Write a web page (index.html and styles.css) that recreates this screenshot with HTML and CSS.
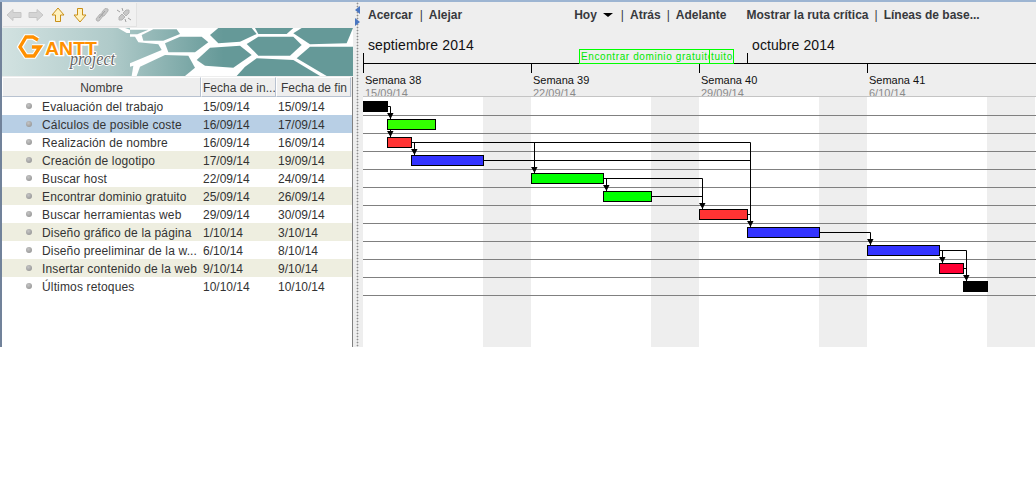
FILE: index.html
```html
<!DOCTYPE html>
<html lang="es">
<head>
  <meta charset="UTF-8" />
  <title>GanttProject</title>
  <link rel="stylesheet" href="styles.css">
</head>
<body>
  <div class="app">
    <div class="left">
      <div class="icons">
        <div class="iconbox">
          <svg width="16" height="16" viewBox="0 0 16 16"><path class="off" d="M1 8 7 2.500V5.500H15V10.500H7V13.500Z"/></svg>
          <svg width="16" height="16" viewBox="0 0 16 16"><path class="off" d="M15 8 9 2.500V5.500H1V10.500H9V13.500Z"/></svg>
          <svg width="16" height="16" viewBox="0 0 16 16"><path class="gold" d="M8 1 14 8H10.500V14.500H5.500V8H2Z"/></svg>
          <svg width="16" height="16" viewBox="0 0 16 16"><path class="gold" d="M8 15 14 8H10.500V1.500H5.500V8H2Z"/></svg>
          <svg width="16" height="16" viewBox="0 0 16 16"><path class="link" d="M2 12 6 7 8 7 9 9 5 14 3 14ZM8 5 11 1.500 14 2 14 4 10 9 8 9Z"/><path class="linkcut" d="M5 11 11 4"/></svg>
          <svg width="16" height="16" viewBox="0 0 16 16"><path class="link" d="M3 13 3 10 6 7 9 10 6 13ZM7 6 10 3 13 3 13 6 10 9Z"/><path class="linkcut" d="M1 3 4 5M6 1 7 4M15 13 12 11M10 15 9 12"/></svg>
        </div>
      </div>
      <div class="banner">
        <svg class="hexes" width="351" height="48" viewBox="-384 9 1053 144">
          <defs>
            <linearGradient id="fade" gradientUnits="userSpaceOnUse" x1="-384" y1="0" x2="280" y2="0">
              <stop offset="0" stop-color="#d2e2e1"/>
              <stop offset="0.5" stop-color="#afcac9"/>
              <stop offset="1" stop-color="#659998"/>
            </linearGradient>
          </defs>
          <rect x="-384" y="9" width="1053" height="144" fill="url(#fade)"/>
          <path class="lattice" d="M-36 9H-15L0 14H55L35 24H-10ZM0 9H669V153H0Z"/>
          <g class="cells">
            <polygon points="0,14 55,14 22,28 0,28"/>
            <polygon points="35,30 70,13 140,13 150,27 100,47 40,47"/>
            <polygon points="105,55 150,35 215,35 235,52 195,82 115,82"/>
            <polygon points="240,30 265,9 365,9 380,27 330,50 265,55"/>
            <polygon points="350,57 385,35 490,35 515,60 480,92 385,92"/>
            <polygon points="200,105 240,68 330,62 365,90 310,128 225,122"/>
            <polygon points="30,125 105,90 175,92 195,128 165,153 20,153"/>
            <polygon points="490,25 515,9 669,9 650,55 540,58"/>
            <polygon points="500,100 540,65 669,65 669,153 590,153"/>
            <polygon points="345,125 380,100 490,105 570,153 320,153"/>
            <polygon points="375,9 490,9 470,27 385,27"/>
            <polygon points="0,35 15,35 25,52 85,58 95,75 0,115"/>
            <polygon points="0,125 10,122 5,153 0,153"/>
          </g>
          <path class="ghalo" d="M-276 45-291 36H-312L-330 66-312 93H-288L-270 66H-294"/>
          <path class="glogo" d="M-276 45-291 36H-312L-330 66-312 93H-288L-270 66H-294"/>
          <text class="gname" x="-255" y="90" textLength="156" lengthAdjust="spacingAndGlyphs">ANTT</text>
          <text class="gsub" x="-180" y="120" textLength="135" lengthAdjust="spacingAndGlyphs">project</text>
        </svg>
      </div>
      <div class="table">
        <div class="thead">
          <div class="th th-name">Nombre</div>
          <div class="th th-start">Fecha de in...</div>
          <div class="th th-end">Fecha de fin</div>
        </div>
        <div class="row"><span class="dot"></span><span class="name">Evaluación del trabajo</span><span class="start">15/09/14</span><span class="end">15/09/14</span></div>
        <div class="row selected"><span class="dot"></span><span class="name">Cálculos de posible coste</span><span class="start">16/09/14</span><span class="end">17/09/14</span></div>
        <div class="row"><span class="dot"></span><span class="name">Realización de nombre</span><span class="start">16/09/14</span><span class="end">16/09/14</span></div>
        <div class="row alt"><span class="dot"></span><span class="name">Creación de logotipo</span><span class="start">17/09/14</span><span class="end">19/09/14</span></div>
        <div class="row"><span class="dot"></span><span class="name">Buscar host</span><span class="start">22/09/14</span><span class="end">24/09/14</span></div>
        <div class="row alt"><span class="dot"></span><span class="name">Encontrar dominio gratuito</span><span class="start">25/09/14</span><span class="end">26/09/14</span></div>
        <div class="row"><span class="dot"></span><span class="name">Buscar herramientas web</span><span class="start">29/09/14</span><span class="end">30/09/14</span></div>
        <div class="row alt"><span class="dot"></span><span class="name">Diseño gráfico de la página</span><span class="start">1/10/14</span><span class="end">3/10/14</span></div>
        <div class="row"><span class="dot"></span><span class="name">Diseño preeliminar de la w...</span><span class="start">6/10/14</span><span class="end">8/10/14</span></div>
        <div class="row alt"><span class="dot"></span><span class="name">Insertar contenido de la web</span><span class="start">9/10/14</span><span class="end">9/10/14</span></div>
        <div class="row"><span class="dot"></span><span class="name">Últimos retoques</span><span class="start">10/10/14</span><span class="end">10/10/14</span></div>
      </div>
    </div>

    <div class="splitter">
      <span class="arrow-left"></span>
      <span class="arrow-right"></span>
    </div>

    <div class="chart">
      <div class="tools">
        <div class="tools-zoom">Acercar<i>|</i>Alejar</div>
        <div class="tools-nav">Hoy<b class="caret"></b><i class="first">|</i>Atrás<i>|</i>Adelante</div>
        <div class="tools-view">Mostrar la ruta crítica<i>|</i>Líneas de base...</div>
      </div>
      <div class="months">
        <div class="month month-sep">septiembre 2014</div>
        <div class="month month-oct">octubre 2014</div>
        <div class="flag flag-long">Encontrar dominio gratuito</div>
        <div class="flag flag-short">tuito</div>
      </div>
      <div class="weeks">
        <div class="week"><span class="wk">Semana 38</span><span class="wd">15/09/14</span></div>
        <div class="week"><span class="wk">Semana 39</span><span class="wd">22/09/14</span></div>
        <div class="week"><span class="wk">Semana 40</span><span class="wd">29/09/14</span></div>
        <div class="week"><span class="wk">Semana 41</span><span class="wd">6/10/14</span></div>
      </div>
      <svg class="gantt" width="673" height="250" viewBox="363 97 673 250">
        <defs>
          <path id="head" d="M-3 -6H3.500L1 -1H0Z"/>
        </defs>
        <g class="weekend">
          <rect x="483" y="97" width="48" height="250"/>
          <rect x="651" y="97" width="48" height="250"/>
          <rect x="819" y="97" width="48" height="250"/>
          <rect x="987" y="97" width="48" height="250"/>
        </g>
        <path class="rowline" d="M363 115.500H1036M363 133.500H1036M363 151.500H1036M363 169.500H1036M363 187.500H1036M363 205.500H1036M363 223.500H1036M363 241.500H1036M363 259.500H1036M363 277.500H1036M363 295.500H1036"/>
        <path class="dep" d="M388 106.500H390.500V137M412 142.500H750.500V227M534.500 142.500V173M414.500 142.500V155M484 160.500H750.500M604 178.500H702.500V209M606.500 178.500V191M652 196.500H702.500M748 214.500H750.500M820 232.500H870.500V245M940 250.500H966.500V281M942.500 250.500V263M964 268.500H966.500"/>
        <g class="bars">
          <rect class="black" x="363.500" y="101.500" width="24" height="10"/>
          <rect class="lime" x="387.500" y="119.500" width="48" height="10"/>
          <rect class="red" x="387.500" y="137.500" width="24" height="10"/>
          <rect class="blue" x="411.500" y="155.500" width="72" height="10"/>
          <rect class="green" x="531.500" y="173.500" width="72" height="10"/>
          <rect class="green" x="603.500" y="191.500" width="48" height="10"/>
          <rect class="red" x="699.500" y="209.500" width="48" height="10"/>
          <rect class="blue" x="747.500" y="227.500" width="72" height="10"/>
          <rect class="blue" x="867.500" y="245.500" width="72" height="10"/>
          <rect class="crimson" x="939.500" y="263.500" width="24" height="10"/>
          <rect class="black" x="963.500" y="281.500" width="24" height="10"/>
        </g>
        <g class="heads">
          <use href="#head" x="390" y="119"/>
          <use href="#head" x="390" y="137"/>
          <use href="#head" x="414" y="155"/>
          <use href="#head" x="534" y="173"/>
          <use href="#head" x="606" y="191"/>
          <use href="#head" x="702" y="209"/>
          <use href="#head" x="750" y="227"/>
          <use href="#head" x="870" y="245"/>
          <use href="#head" x="942" y="263"/>
          <use href="#head" x="966" y="281"/>
        </g>
      </svg>
    </div>
  </div>
</body>
</html>
```

FILE: styles.css
```css
html, body {
  margin: 0;
  padding: 0;
  background: #ffffff;
}
body {
  font-family: "Liberation Sans", Arial, sans-serif;
  font-size: 12px;
  color: #333333;
}
.app {
  width: 1036px;
  height: 347px;
  display: flex;
  background: #eeeeee;
  border-top: 2px solid #9db5d2;
  box-sizing: border-box;
  overflow: hidden;
}

/* left side */
.left {
  width: 353px;
  flex: none;
  border-left: 2px solid #71829a;
  box-sizing: border-box;
  display: flex;
  flex-direction: column;
}
.icons {
  height: 26px;
  padding-top: 1px;
  box-sizing: border-box;
}
.iconbox {
  width: 134px;
  height: 24px;
  margin-left: 1px;
  background: #f1f1f1;
  border-right: 1px solid #e2e2e2;
  border-bottom: 1px solid #e2e2e2;
  box-sizing: border-box;
  display: flex;
  align-items: center;
  gap: 6px;
  padding-left: 3px;
}
.off {
  fill: #d4d4d4;
  stroke: #c6c6c6;
}
.gold {
  fill: #fff2bf;
  stroke: #c98f16;
}
.link {
  fill: #c8c8c8;
  stroke: #b4b4b4;
}
.linkcut {
  fill: none;
  stroke: #a0a0a0;
}
.banner {
  height: 48px;
  flex: none;
}
.hexes {
  display: block;
}
.lattice {
  fill: #ffffff;
}
.cells polygon {
  fill: url(#fade);
}
.ghalo {
  fill: none;
  stroke: #ffffff;
  stroke-width: 17;
}
.glogo {
  fill: none;
  stroke: #ff9000;
  stroke-width: 10;
}
.gname {
  font-family: "Liberation Sans", Arial, sans-serif;
  font-weight: bold;
  font-size: 54px;
  fill: #ff9000;
  stroke: #ffffff;
  stroke-width: 8px;
  paint-order: stroke;
}
.gsub {
  font-family: "Liberation Serif", serif;
  font-style: italic;
  font-size: 54px;
  fill: #666666;
  stroke: #ffffff;
  stroke-width: 6px;
  paint-order: stroke;
}
.table {
  flex: 1;
  background: #ffffff;
  margin-top: 1px;
  border-right: 1px solid #808080;
}
.thead {
  height: 20px;
  display: flex;
  background: #eeeeee;
  box-sizing: border-box;
}
.th {
  height: 20px;
  line-height: 20px;
  box-sizing: border-box;
  border: 1px solid #b8c2d0;
  border-top: 1px solid #ffffff;
  border-left: 1px solid #ffffff;
  overflow: hidden;
  white-space: nowrap;
  color: #3a3a3a;
}
.th-name {
  width: 199px;
  text-align: center;
}
.th-start {
  width: 75px;
  padding-left: 1px;
}
.th-end {
  width: 75px;
  padding-left: 4px;
}
.row {
  height: 18px;
  line-height: 18px;
  display: flex;
  align-items: center;
  white-space: nowrap;
}
.row.alt {
  background: #eeeee0;
}
.row.selected {
  background: #b8cfe5;
}
.row .name, .row .start, .row .end {
  padding-top: 2px;
}
.dot {
  width: 6px;
  height: 6px;
  margin-left: 24px;
  border-radius: 50%;
  background: radial-gradient(circle at 40% 35%, #c4c4c4, #8c8c8c);
  flex: none;
}
.name {
  width: 161px;
  margin-left: 10px;
  letter-spacing: 0.15px;
  overflow: hidden;
}
.start {
  width: 75px;
}
.end {
  width: 70px;
}

/* divider between table and chart */
.splitter {
  width: 10px;
  flex: none;
  background: radial-gradient(circle, #8f8f8f 0.8px, transparent 1.1px) 3px 0 / 3px 3px repeat-y;
  position: relative;
}
.arrow-left, .arrow-right {
  position: absolute;
  left: 2px;
  width: 0;
  height: 0;
  border-top: 4px solid transparent;
  border-bottom: 4px solid transparent;
}
.arrow-left {
  top: 4px;
  border-right: 5px solid #4a76c0;
}
.arrow-right {
  top: 16px;
  border-left: 5px solid #4a76c0;
}

/* chart side */
.chart {
  width: 673px;
  flex: none;
  display: flex;
  flex-direction: column;
}
.tools {
  height: 26px;
  flex: none;
  display: flex;
  align-items: center;
  font-weight: bold;
  white-space: nowrap;
  padding-left: 5px;
  color: #37393d;
}
.tools i {
  font-style: normal;
  font-weight: normal;
  margin: 0 6px;
}
.tools-zoom i {
  margin-left: 7px;
}
.tools-nav {
  margin-left: 112px;
  display: flex;
  align-items: center;
}
.tools-view {
  margin-left: 20px;
}
.caret {
  width: 0;
  height: 0;
  margin-left: 6px;
  border-left: 5px solid transparent;
  border-right: 5px solid transparent;
  border-top: 4px solid #000000;
}
.tools-nav i.first {
  margin-left: 8px;
}
.months {
  height: 35px;
  flex: none;
  display: flex;
  position: relative;
  border-bottom: 1px solid #000000;
  box-sizing: content-box;
}
.month {
  font-size: 14px;
  letter-spacing: 0.1px;
  padding: 9px 0 0 5px;
  box-sizing: border-box;
  color: #111111;
  position: relative;
}
.month::before {
  content: "";
  position: absolute;
  left: 0;
  bottom: 0;
  height: 10px;
  border-left: 1px solid #000000;
}
.month-sep {
  width: 384px;
}
.month-oct {
  flex: 1;
}
.flag {
  position: absolute;
  top: 21px;
  height: 15px;
  box-sizing: border-box;
  border: 1px solid #00ff00;
  background: #eeeeee;
  color: #00e800;
  font-size: 10px;
  line-height: 13px;
  letter-spacing: 0.6px;
  padding-left: 1px;
  overflow: hidden;
  white-space: nowrap;
}
.flag-long {
  left: 216px;
  width: 131px;
}
.flag-short {
  left: 346px;
  width: 25px;
}
.weeks {
  height: 33px;
  flex: none;
  display: flex;
  box-sizing: border-box;
  border-bottom: 1px solid #c4c4c4;
  overflow: hidden;
}
.week {
  width: 168px;
  flex: none;
  box-sizing: border-box;
  padding-left: 2px;
  display: flex;
  flex-direction: column;
  position: relative;
  font-size: 11px;
  line-height: 13px;
  color: #111111;
}
.week::before {
  content: "";
  position: absolute;
  left: 0;
  top: 0;
  height: 9px;
  border-left: 1px solid #000000;
}
.wk {
  margin-top: 10px;
}
.wd {
  color: #8a8a8a;
}
.gantt {
  display: block;
  flex: none;
  background: #ffffff;
}
.weekend rect {
  fill: #eeeeee;
}
.rowline {
  fill: none;
  stroke: #808080;
  stroke-width: 1;
}
.dep {
  fill: none;
  stroke: #000000;
  stroke-width: 1;
}
.bars rect {
  stroke: #000000;
  stroke-width: 1;
}
.black {
  fill: #000000;
}
.lime {
  fill: #33ff00;
}
.green {
  fill: #00ff00;
}
.red {
  fill: #ff3333;
}
.crimson {
  fill: #ff0033;
}
.blue {
  fill: #3333ff;
}
.heads {
  fill: #000000;
}
```
